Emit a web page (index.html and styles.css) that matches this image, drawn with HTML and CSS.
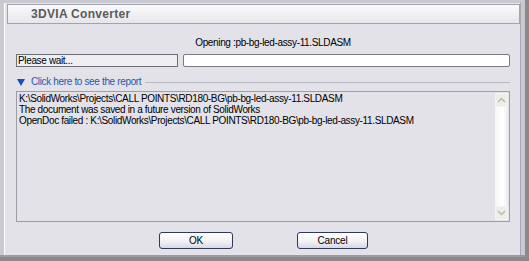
FILE: index.html
```html
<!DOCTYPE html>
<html lang="en">
<head>
    <meta charset="UTF-8">
    <title>3DVIA Converter</title>
    <link rel="stylesheet" href="styles.css">
</head>
<body>
    <div class="window">
        <div class="dialog">
            <header class="title-bar">3DVIA Converter</header>
            <main class="content">
                <p class="opening">Opening :pb-bg-led-assy-11.SLDASM</p>

                <div class="status-row">
                    <div class="status">Please wait...</div>
                    <div class="progress"></div>
                </div>

                <div class="report-toggle">
                    <span class="arrow"></span>
                    <span class="toggle-label">Click here to see the report</span>
                    <span class="rule"></span>
                </div>

                <div class="report">
                    <div class="report-text">
                        K:\SolidWorks\Projects\CALL POINTS\RD180-BG\pb-bg-led-assy-11.SLDASM<br>
                        The document was saved in a future version of SolidWorks<br>
                        OpenDoc failed : K:\SolidWorks\Projects\CALL POINTS\RD180-BG\pb-bg-led-assy-11.SLDASM
                    </div>
                    <div class="scrollbar">
                        <span class="scroll-btn">
                            <svg width="9" height="6" viewBox="0 0 9 6"><path d="M1 5 L4.5 1.5 L8 5" fill="none" stroke="#b8bcb0" stroke-width="1.5"/></svg>
                        </span>
                        <span class="scroll-track"></span>
                        <span class="scroll-btn">
                            <svg width="9" height="6" viewBox="0 0 9 6"><path d="M1 1 L4.5 4.5 L8 1" fill="none" stroke="#b8bcb0" stroke-width="1.5"/></svg>
                        </span>
                    </div>
                </div>

                <div class="buttons">
                    <button type="button" class="button">OK</button>
                    <button type="button" class="button">Cancel</button>
                </div>
            </main>
        </div>
    </div>
</body>
</html>
```

FILE: styles.css
```css
body {
    margin: 0;
    background-color: #8a8a8a;
    font-family: 'Liberation Sans', Arial, sans-serif;
    font-size: 10px;
    letter-spacing: -0.35px;
    color: #000;
}
.window {
    width: 521px;
    height: 252px;
    padding: 3px 4px 0 0;
    background-color: #c9c9d1;
    border-bottom: 2px solid #9a9aa2;
}
.dialog {
    height: 252px;
    margin-left: 4px;
    border-left: 1px solid #ffffff;
    border-right: 1px solid #a8a8b2;
    background-color: #e3e2e8;
    display: flex;
    flex-direction: column;
}
.title-bar {
    margin: 1px 0 0 2px;
    height: 18px;
    border: 1px solid #a4a4b0;
    background: linear-gradient(#fbfbfc, #e6e6ea);
    padding-left: 23px;
    font-size: 12px;
    font-weight: bold;
    color: #5a5a5a;
    line-height: 18px;
    letter-spacing: 0.3px;
}
.content {
    flex: 1;
    padding: 0 10px 0 11px;
    display: flex;
    flex-direction: column;
}
.opening {
    margin: 13px 0 0;
    text-align: center;
    line-height: 12px;
    padding-left: 20px;
}
.status-row {
    display: flex;
    gap: 5px;
    margin-top: 5px;
    height: 13px;
}
.status {
    width: 159px;
    border: 1px solid #6e6e78;
    background-color: #efeff2;
    line-height: 11px;
    padding-left: 1px;
}
.progress {
    flex: 1;
    border: 1px solid #7a7a84;
    border-radius: 2px;
    background-color: #ffffff;
}
.report-toggle {
    display: flex;
    align-items: center;
    margin-top: 9px;
    height: 12px;
    padding-left: 1px;
}
.arrow {
    width: 0;
    height: 0;
    border-left: 4px solid transparent;
    border-right: 4px solid transparent;
    border-top: 7px solid #1a50b8;
    margin-right: 6px;
}
.toggle-label {
    color: #2657b0;
    line-height: 12px;
}
.rule {
    flex: 1;
    height: 1px;
    background-color: #b8b8c0;
    margin-left: 4px;
}
.report {
    margin-top: 3px;
    height: 129px;
    border: 1px solid #9e9ea6;
    display: flex;
}
.report-text {
    flex: 1;
    padding: 1px 2px;
    line-height: 11px;
}
.scrollbar {
    width: 13px;
    margin: 1px 1px 1px 0;
    display: flex;
    flex-direction: column;
    background: linear-gradient(90deg, #f6f6f8, #ffffff 60%, #ececf0);
}
.scroll-btn {
    height: 12px;
    display: flex;
    align-items: center;
    justify-content: center;
    background-color: #eeeee8;
    border: 1px solid #f4f4f0;
}
.scroll-track {
    flex: 1;
}
.buttons {
    display: flex;
    justify-content: center;
    gap: 64px;
    margin-top: 10px;
    padding-left: 1px;
}
.button {
    font-family: 'Liberation Sans', Arial, sans-serif;
    font-size: 10px;
    letter-spacing: -0.2px;
    width: 74px;
    height: 17px;
    padding: 0;
    border: 1px solid #2e3a58;
    border-radius: 3px;
    background: linear-gradient(#ffffff, #f2f2f6 55%, #d8d8e4);
    color: #000;
}
.button + .button {
    width: 71px;
}
```
